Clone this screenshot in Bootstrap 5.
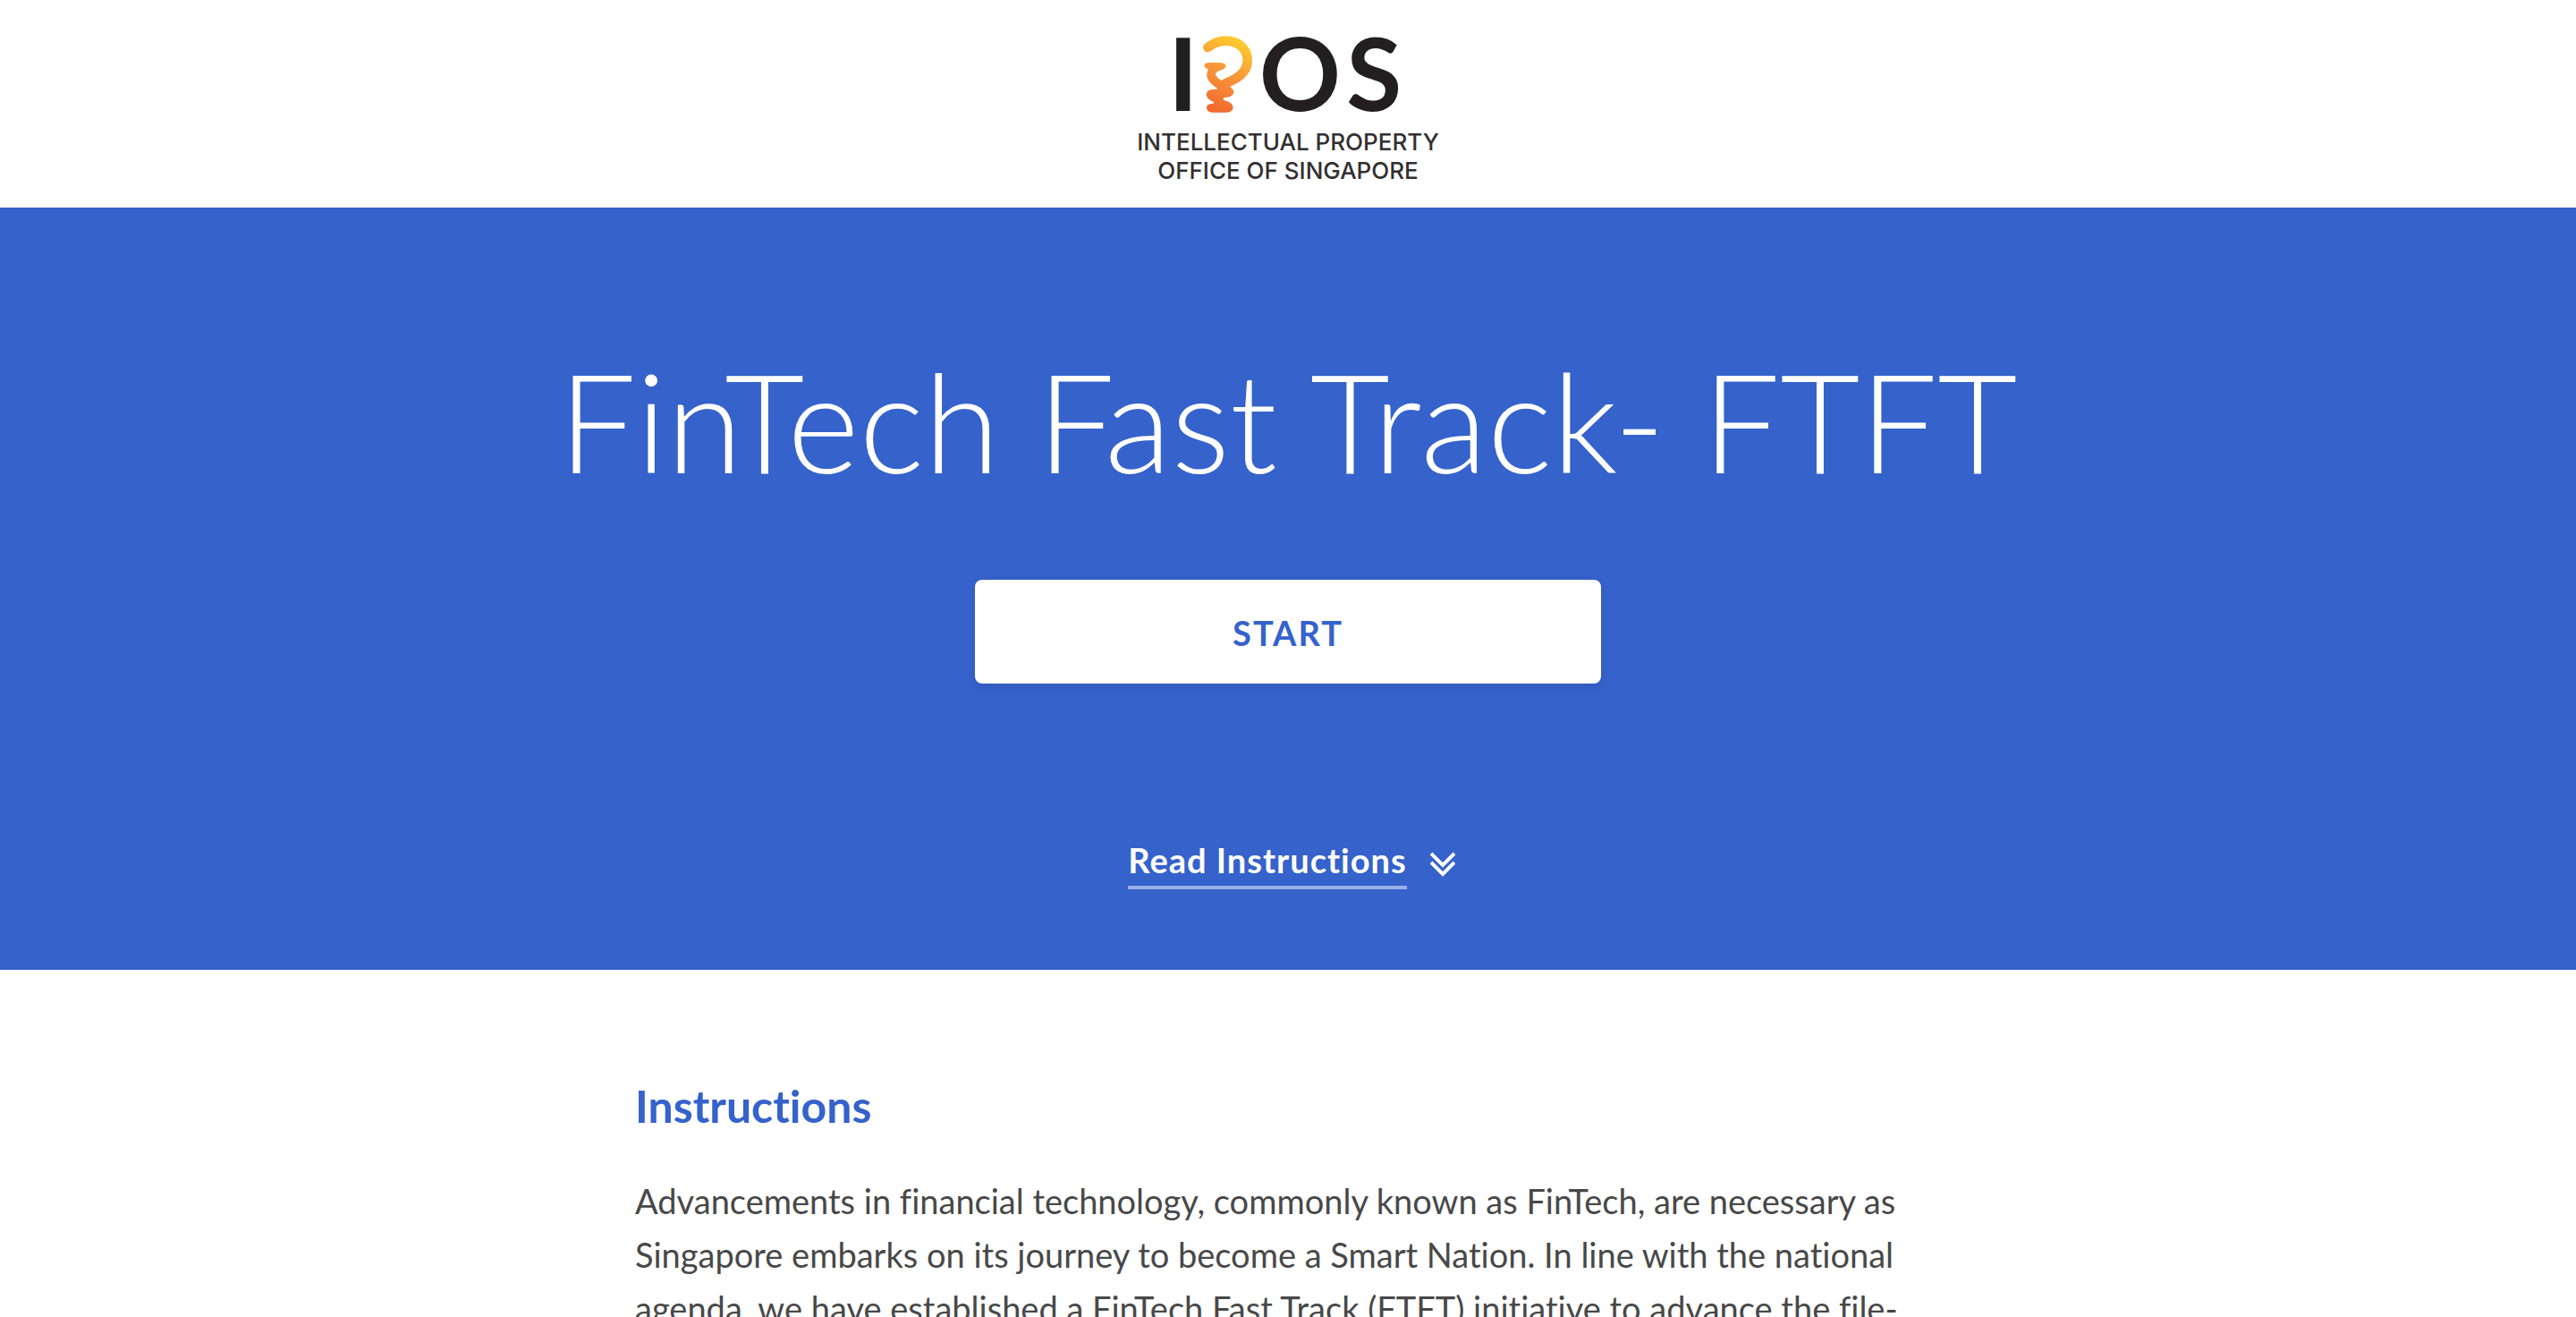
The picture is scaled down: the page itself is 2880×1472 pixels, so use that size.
<!DOCTYPE html>
<html lang="en">
<head>
<meta charset="utf-8">
<meta name="viewport" content="width=device-width, initial-scale=1">
<title>FinTech Fast Track- FTFT</title>
<link href="https://cdn.jsdelivr.net/npm/bootstrap@5.3.0/dist/css/bootstrap.min.css" rel="stylesheet">
<style>
  body { font-family: Lato, "Open Sans", sans-serif; font-size: 38px; line-height: 60px; color: #484848; font-variant-ligatures: none; }
  .brand-logo { width: 400px; height: 232px; }
  .brand-logo text { fill: #231f20; text-anchor: middle; }
  .brand-logo .letters { font-family: Lato, sans-serif; font-weight: 700; font-size: 339px; }
  .brand-logo .agency { font-family: Inter, sans-serif; font-weight: 500; font-size: 78px; fill: #332f30; }
  .hero { background: #3562cb; padding: 150px 24px 90px; }
  .hero-title { font-size: 154px; line-height: 176px; font-weight: 300; margin-bottom: 90px; }
  .start-btn { width: 700px; max-width: 100%; height: 116px; border-radius: 8px; font-size: 38px; font-weight: 700; letter-spacing: 2px; color: #3562cb; padding-top: 8px; margin-bottom: 168px; box-shadow: 0 2px 10px rgba(0,0,0,.1); }
  .start-btn:hover { background: #f2f5fc; color: #3562cb; }
  .read-link { font-weight: 700; letter-spacing: 1px; gap: 26px; line-height: 58px; padding-left: 8px; }
  .read-link span { border-bottom: 4px solid #9ab0e5; }
  .read-link svg { width: 28px; height: 28px; margin-top: 6px; }
  .instructions { max-width: 1460px; padding-top: 122px; }
  .instructions h2 { font-size: 50px; line-height: 60px; font-weight: 700; color: #3562cb; margin-bottom: 46px; }
</style>
</head>
<body>
<header class="d-flex justify-content-center bg-white">
  <svg class="brand-logo" viewBox="0 -60 1200 696" role="img" aria-label="IPOS, Intellectual Property Office of Singapore">
    <defs>
      <linearGradient id="flame" gradientUnits="userSpaceOnUse" x1="450" y1="90" x2="340" y2="315">
        <stop offset="0" stop-color="#ffc72f"/><stop offset=".45" stop-color="#f7953a"/><stop offset="1" stop-color="#f1652f"/>
      </linearGradient>
    </defs>
    <text class="letters" x="248" y="312">I</text>
    <path d="M331 99C350 85 370 77 390 77C435 77 464 105 464 142C464 175 442 196 412 210Q394 218 376 227" fill="none" stroke="url(#flame)" stroke-width="32" stroke-linecap="round"/>
    <path d="M335 150H374Q392 152 392 163Q388 172 368 178Q355 184 357 192Q364 203 377 211L402 228Q418 238 418 250Q415 266 390 267Q380 268 384 276Q416 283 416 300Q414 317 395 317H345Q327 315 327 300Q328 288 345 288Q354 287 350 281Q328 273 326 258Q327 242 345 240Q360 240 364 237C345 225 330 210 328 195Q327 182 333 172Q318 168 320 160Q322 150 335 150Z" fill="url(#flame)"/>
    <text class="letters" x="640" y="312">O</text>
    <text class="letters" x="889" y="312">S</text>
    <text class="agency" x="600" y="444">INTELLECTUAL PROPERTY</text>
    <text class="agency" x="600" y="539">OFFICE OF SINGAPORE</text>
  </svg>
</header>
<main>
  <section class="hero text-white text-center d-flex flex-column align-items-center">
    <h1 class="hero-title">FinTech Fast Track- FTFT</h1>
    <button type="button" class="btn btn-light bg-white border-0 start-btn">START</button>
    <a href="#instructions" class="read-link d-inline-flex align-items-center text-white text-decoration-none">
      <span>Read Instructions</span>
      <svg viewBox="0 0 28 28" fill="none" stroke="#fff" stroke-width="4" aria-hidden="true"><path d="M1 2l13 13L27 2M1 12l13 13L27 12"/></svg>
    </a>
  </section>
  <section id="instructions" class="instructions mx-auto">
    <h2>Instructions</h2>
    <p class="mb-0">Advancements in financial technology, commonly known as FinTech, are necessary as<br> Singapore embarks on its journey to become a Smart Nation. In line with the national<br> agenda, we have established a FinTech Fast Track (FTFT) initiative to advance the file-</p>
  </section>
</main>
<script src="https://cdn.jsdelivr.net/npm/bootstrap@5.3.0/dist/js/bootstrap.bundle.min.js"></script>
</body>
</html>
